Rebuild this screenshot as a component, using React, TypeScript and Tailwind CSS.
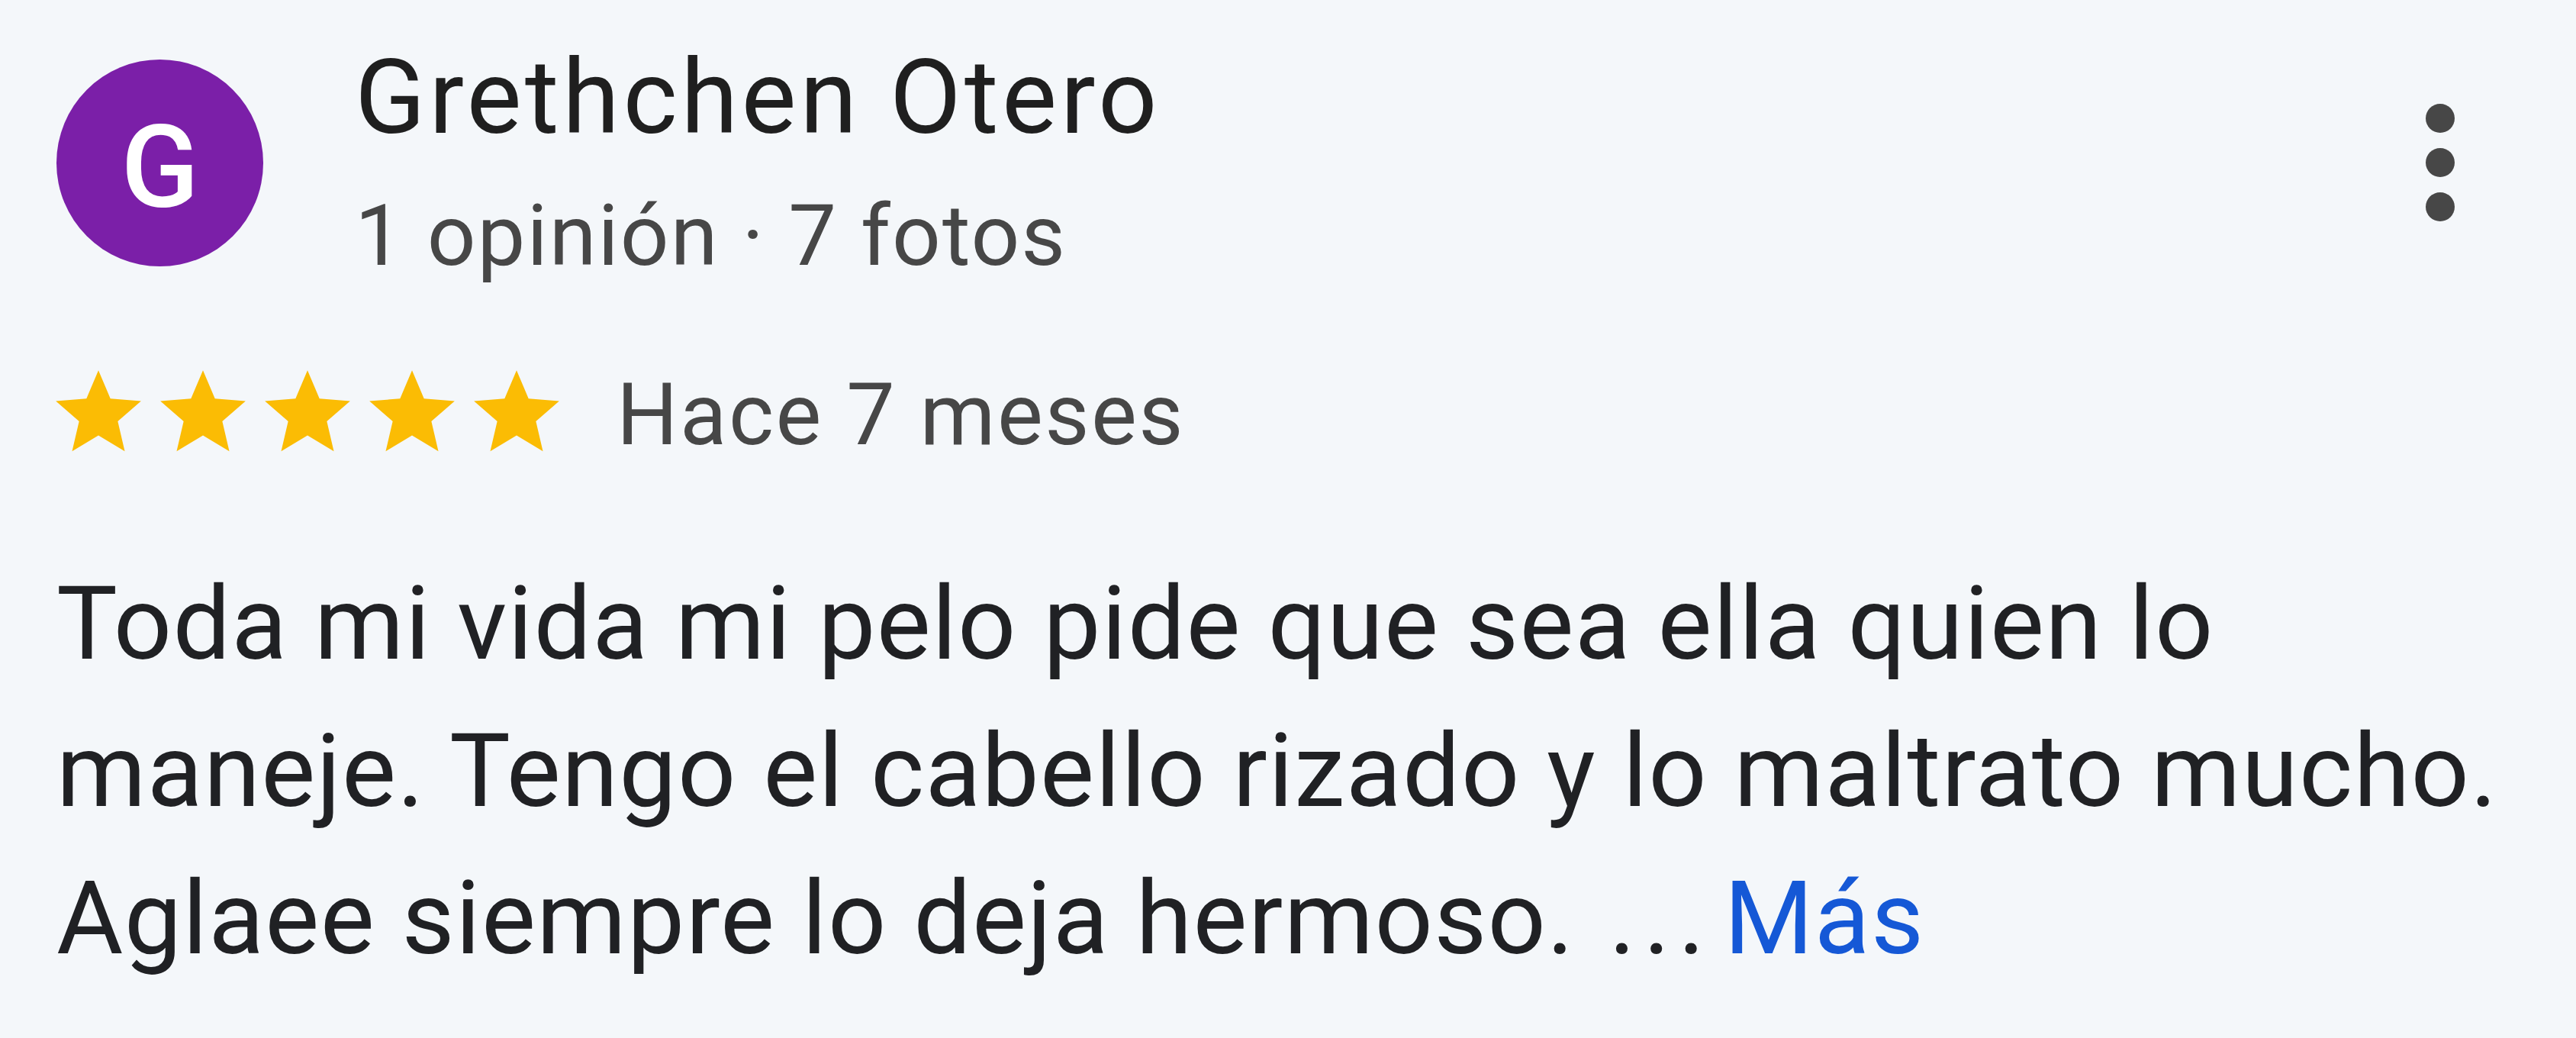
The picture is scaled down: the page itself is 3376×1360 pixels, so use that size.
import React from 'react';

const Star = () => (
  <svg viewBox="0 0 24 24" className="w-[134px] h-[134px] shrink-0" fill="#fbbc04">
    <path d="M12 17.27L18.18 21l-1.64-7.03L22 9.24l-7.19-.61L12 2 9.19 8.63 2 9.24l5.46 4.73L5.82 21z" />
  </svg>
);

function App() {
  return (
    <div
      className="w-full h-[1360px] bg-[#f4f7fa] overflow-hidden pl-[74px] pt-[60px]"
      style={{ fontFamily: 'Roboto, "Noto Sans", sans-serif' }}
    >
      {/* header */}
      <div className="flex items-start">
        <div className="mt-[18px] w-[271px] h-[271px] rounded-full bg-[#7b1fa8] flex items-center justify-center shrink-0">
          <span className="text-white text-[150px] font-medium leading-none pt-[12px]">G</span>
        </div>
        <div className="ml-[120px] flex flex-col">
          <div className="text-[136px] leading-none text-[#1f1f1f] tracking-[4.5px]">Grethchen Otero</div>
          <div className="mt-[57px] text-[112px] leading-none text-[#474747] tracking-[2px]">
            1 opinión · 7 fotos
          </div>
        </div>
        <div className="ml-auto mr-[159px] mt-[76px] flex flex-col gap-[20px]">
          <div className="w-[38px] h-[38px] rounded-full bg-[#474747]" />
          <div className="w-[38px] h-[38px] rounded-full bg-[#474747]" />
          <div className="w-[38px] h-[38px] rounded-full bg-[#474747]" />
        </div>
      </div>

      {/* rating */}
      <div className="mt-[109px] -ml-[12px] flex items-start">
        <div className="flex gap-[3px]">
          <Star />
          <Star />
          <Star />
          <Star />
          <Star />
        </div>
        <div className="ml-[64px] mt-[13px] text-[113px] leading-none text-[#474747] tracking-[2.4px]">
          Hace 7 meses
        </div>
      </div>

      {/* review text */}
      <p className="mt-[113px] text-[134px] leading-[193px] text-[#202124] whitespace-nowrap tracking-[1.3px]">
        Toda mi vida mi pelo pide que sea ella quien lo
        <br />
        maneje. Tengo el cabello rizado y lo maltrato mucho.
        <br />
        Aglaee siempre lo deja hermoso. <span className="ml-[10px] tracking-[10px]">...</span>
        <span className="ml-[15px] text-[#1558d6]">Más</span>
      </p>
    </div>
  );
}

export default App;
